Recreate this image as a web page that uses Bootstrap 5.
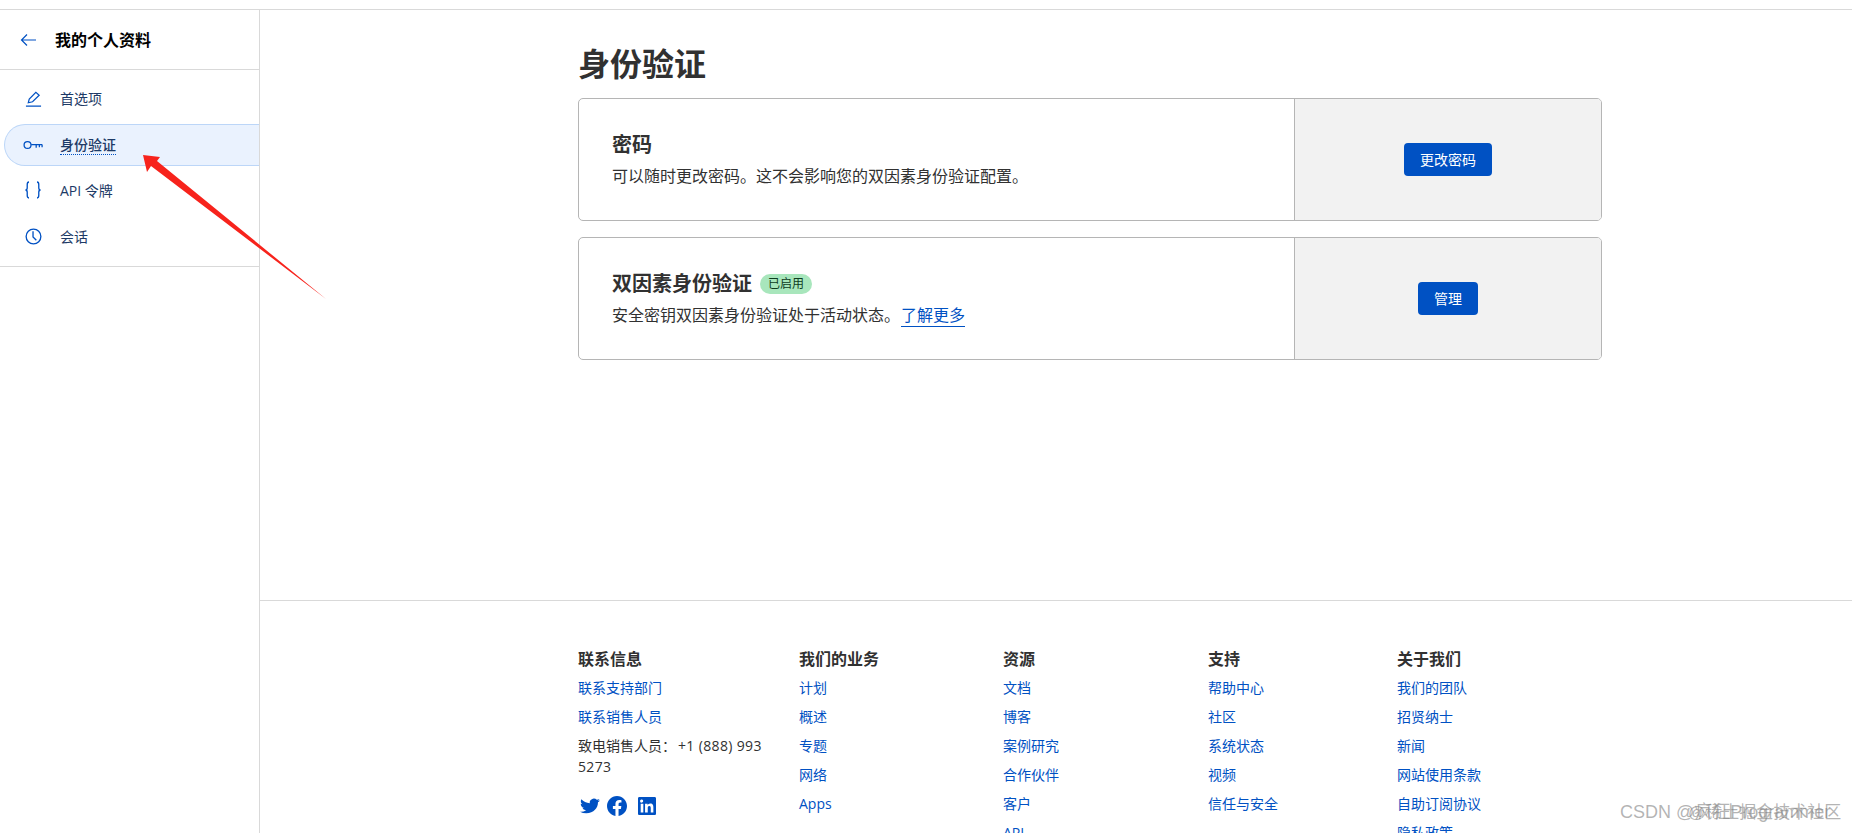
<!DOCTYPE html>
<html lang="zh-CN">
<head>
  <meta charset="UTF-8">
  <meta name="viewport" content="width=device-width, initial-scale=1.0">
  <title>身份验证</title>
  <link href="https://cdn.jsdelivr.net/npm/bootstrap@5.3.0/dist/css/bootstrap.min.css" rel="stylesheet">
  <style>
    html, body { height: 833px; overflow: hidden; }
    body { font-family: "Open Sans", "Noto Sans CJK SC", sans-serif; color: #313131; background: #fff; }
    .page-shell { position: relative; height: 833px; overflow: hidden; padding-top: 9px; }
    .top-rule { border-top: 1px solid #d9d9d9; }
    .side-panel { width: 260px; height: 824px; flex: none; border-right: 1px solid #d9d9d9; }
    .side-head { height: 60px; padding-left: 20px; padding-top: 1px; border-bottom: 1px solid #d9d9d9; font-size: 16px; font-weight: 700; color: #000; gap: 19px; }
    .side-list { padding: 8px 0 8px 4px; border-bottom: 1px solid #d9d9d9; height: 197px; }
    .side-item { height: 42px; margin-bottom: 4px; padding-left: 17px; padding-bottom: 2px; gap: 16px; font-size: 14px; color: #1d3a66; border: 1px solid transparent; border-right: 0; text-decoration: none; }
    .side-item.is-active { padding-bottom: 0; background: #eaf2fe; border-color: #bcd6f8; border-radius: 21px 0 0 21px; font-weight: 500; color: #1d3a66; }
    .dotted-label { border-bottom: 1px dotted #0051c3; line-height: 19px; }
    .icon-slot { width: 22px; flex: none; display: flex; justify-content: center; }
    .main-col { min-width: 0; }
    .main-body { height: 591px; padding: 30px 0 0 318px; border-bottom: 1px solid #d9d9d9; }
    .page-title { font-size: 32px; font-weight: 700; line-height: 48px; margin: 0 0 10px; color: #313131; }
    .auth-box { width: 1024px; height: 123px; margin-bottom: 16px; border: 1px solid #b5b5b5; border-radius: 5px; overflow: hidden; }
    .auth-text { width: 715px; padding: 31px 0 0 33px; flex: none; }
    .auth-title { font-size: 20px; font-weight: 700; line-height: 30px; margin: 0 0 4px; color: #313131; }
    .auth-desc { font-size: 16px; line-height: 24px; margin: 0; }
    .auth-side { background: #f2f2f2; border-left: 1px solid #b5b5b5; }
    .blue-btn { background: #0051c3; color: #fff; border: 0; font-size: 14px; height: 33px; padding: 0 16px; border-radius: 4px; }
    .on-pill { background: #a8e6bc; color: #0d3b1e; font-size: 12px; font-weight: 400; line-height: 20px; padding: 0 8px; border-radius: 10px; margin-left: 8px; }
    .learn-link { color: #0051c3; text-decoration: none; border-bottom: 1px solid #0051c3; margin-left: 1px; }
    .foot-area { padding: 46px 0 0 318px; }
    .foot-col { flex: none; }
    .foot-title { font-size: 16px; font-weight: 700; line-height: 24px; margin: 0 0 6px; color: #313131; }
    .foot-col a, .foot-col p { display: block; font-size: 14px; line-height: 21px; margin: 0 0 8px; color: #0051c3; text-decoration: none; }
    .foot-col p { color: #313131; width: 196px; }
    .phone-no { letter-spacing: .35px; margin-left: 2px; }
    .social-row { gap: 7px; margin-top: 19px; padding-left: 2px; }
    .arrow-mark { position: absolute; left: 0; top: 0; pointer-events: none; }
    .water-mark { position: absolute; top: 799px; font-family: "Liberation Sans", "Noto Sans CJK SC", sans-serif; font-size: 18px; color: rgba(130,130,130,.6); white-space: nowrap; }
    .mark-one { left: 1620px; }
    .mark-two { left: 1688px; font-size: 17px; top: 800px; }
  </style>
</head>
<body>
  <div class="page-shell">
    <div class="top-rule d-flex">
      <!-- 左侧导航 -->
      <aside class="side-panel">
        <div class="side-head d-flex align-items-center">
          <svg width="16" height="14" viewBox="0 0 16 14" fill="none" stroke="#0051c3" stroke-width="1.2"><path d="M16 7H1.5M7 1.5 1.5 7 7 12.5"/></svg>
          <span>我的个人资料</span>
        </div>
        <div class="side-list">
          <a class="side-item d-flex align-items-center" href="#">
            <span class="icon-slot"><svg width="17" height="17" viewBox="0 0 18 18" fill="none" stroke="#0051c3" stroke-width="1.3"><path d="M3.5 13.5 4.5 9.5 11.5 2.5 15 5.5 8 12.5ZM1 17H17"/></svg></span>
            <span>首选项</span>
          </a>
          <a class="side-item is-active d-flex align-items-center" href="#">
            <span class="icon-slot"><svg width="20" height="10" viewBox="0 0 22 10" fill="none" stroke="#0051c3" stroke-width="1.4"><circle cx="5" cy="5" r="3.8"/><path d="M9 4.5H21M14.5 4.5V8M18 4.5V7.5M21 4.5V7.5"/></svg></span>
            <span class="dotted-label">身份验证</span>
          </a>
          <a class="side-item d-flex align-items-center" href="#">
            <span class="icon-slot"><svg width="16" height="18" viewBox="0 0 18 20" fill="none" stroke="#0051c3" stroke-width="1.5"><path d="M4.5 1C2.5 1 2.5 2 2.5 4V7.5C2.5 9 1.5 10 .5 10 1.5 10 2.5 11 2.5 12.5V16C2.5 18 2.5 19 4.5 19M13.5 1C15.5 1 15.5 2 15.5 4V7.5C15.5 9 16.5 10 17.5 10 16.5 10 15.5 11 15.5 12.5V16C15.5 18 15.5 19 13.5 19"/></svg></span>
            <span>API 令牌</span>
          </a>
          <a class="side-item d-flex align-items-center" href="#">
            <span class="icon-slot"><svg width="17" height="17" viewBox="0 0 18 18" fill="none" stroke="#0051c3" stroke-width="1.4"><circle cx="9" cy="9" r="7.8"/><path d="M8.5 3.5V9.5L12 13"/></svg></span>
            <span>会话</span>
          </a>
        </div>
      </aside>

      <div class="main-col flex-grow-1">
        <main class="main-body">
          <h1 class="page-title">身份验证</h1>
          <section class="auth-box d-flex">
            <div class="auth-text">
              <h2 class="auth-title">密码</h2>
              <p class="auth-desc">可以随时更改密码。这不会影响您的双因素身份验证配置。</p>
            </div>
            <div class="auth-side flex-grow-1 d-flex align-items-center justify-content-center">
              <button class="blue-btn" type="button">更改密码</button>
            </div>
          </section>
          <section class="auth-box d-flex">
            <div class="auth-text">
              <h2 class="auth-title d-flex align-items-center">双因素身份验证<span class="on-pill">已启用</span></h2>
              <p class="auth-desc">安全密钥双因素身份验证处于活动状态。<a class="learn-link" href="#">了解更多</a></p>
            </div>
            <div class="auth-side flex-grow-1 d-flex align-items-center justify-content-center">
              <button class="blue-btn" type="button">管理</button>
            </div>
          </section>
        </main>

        <footer class="foot-area d-flex">
          <div class="foot-col" style="width:221px">
            <h3 class="foot-title">联系信息</h3>
            <a href="#">联系支持部门</a>
            <a href="#">联系销售人员</a>
            <p>致电销售人员：<span class="phone-no">+1 (888) 993 5273</span></p>
            <div class="social-row d-flex align-items-center">
              <svg width="20" height="18" viewBox="0 0 24 24" preserveAspectRatio="none" fill="#0051c3"><path d="M23.95 4.57a10 10 0 0 1-2.82.77 4.96 4.96 0 0 0 2.16-2.72c-.95.56-2 .96-3.12 1.19a4.92 4.92 0 0 0-8.38 4.48C7.69 8.1 4.07 6.13 1.64 3.16a4.82 4.82 0 0 0-.66 2.47c0 1.71.87 3.21 2.19 4.1a4.9 4.9 0 0 1-2.23-.62v.06a4.92 4.92 0 0 0 3.95 4.83 5 5 0 0 1-2.21.08 4.94 4.94 0 0 0 4.6 3.42A9.87 9.87 0 0 1 0 19.54a14 14 0 0 0 7.56 2.21c9.05 0 14-7.5 14-13.98l-.02-.64a9.9 9.9 0 0 0 2.41-2.56z"/></svg>
              <svg width="20" height="20" viewBox="0 0 24 24" fill="#0051c3"><path d="M24 12.07C24 5.4 18.63 0 12 0S0 5.4 0 12.07c0 6.03 4.39 11.03 10.13 11.93v-8.44H7.08v-3.49h3.05V9.41c0-3.02 1.79-4.69 4.53-4.69 1.31 0 2.69.24 2.69.24v2.97h-1.52c-1.49 0-1.96.93-1.96 1.89v2.25h3.33l-.53 3.49h-2.8V24C19.61 23.1 24 18.1 24 12.07z"/></svg>
              <svg width="18" height="18" viewBox="0 0 24 24" fill="#0051c3" class="ms-1"><path d="M22.2 0H1.8C.8 0 0 .8 0 1.8v20.4C0 23.2.8 24 1.8 24h20.4c1 0 1.8-.8 1.8-1.8V1.8C24 .8 23.2 0 22.2 0zM7.1 20.5H3.6V9h3.5zM5.3 7.4a2.1 2.1 0 1 1 0-4.1 2.1 2.1 0 0 1 0 4.1zm15.2 13.1H17v-5.6c0-1.3 0-3-1.9-3s-2.1 1.4-2.1 2.9v5.7H9.4V9h3.4v1.6h.1c.5-.9 1.6-1.9 3.4-1.9 3.6 0 4.2 2.4 4.2 5.5z"/></svg>
            </div>
          </div>
          <div class="foot-col" style="width:204px">
            <h3 class="foot-title">我们的业务</h3>
            <a href="#">计划</a><a href="#">概述</a><a href="#">专题</a><a href="#">网络</a><a href="#">Apps</a>
          </div>
          <div class="foot-col" style="width:205px">
            <h3 class="foot-title">资源</h3>
            <a href="#">文档</a><a href="#">博客</a><a href="#">案例研究</a><a href="#">合作伙伴</a><a href="#">客户</a><a href="#">API</a>
          </div>
          <div class="foot-col" style="width:189px">
            <h3 class="foot-title">支持</h3>
            <a href="#">帮助中心</a><a href="#">社区</a><a href="#">系统状态</a><a href="#">视频</a><a href="#">信任与安全</a>
          </div>
          <div class="foot-col" style="width:189px">
            <h3 class="foot-title">关于我们</h3>
            <a href="#">我们的团队</a><a href="#">招贤纳士</a><a href="#">新闻</a><a href="#">网站使用条款</a><a href="#">自助订阅协议</a><a href="#">隐私政策</a>
          </div>
        </footer>
      </div>
    </div>

    <!-- 截图上的红色箭头 -->
    <svg class="arrow-mark" width="400" height="320" viewBox="0 0 400 320"><polygon points="143,155 160,157 157,161 326,299 151,166 147,172" fill="#f7231c"/></svg>
    <div class="water-mark mark-one">CSDN @疯狂Programmer</div>
    <div class="water-mark mark-two">@稀土掘金技术社区</div>
  </div>
  <script src="https://cdn.jsdelivr.net/npm/bootstrap@5.3.0/dist/js/bootstrap.bundle.min.js"></script>
</body>
</html>
